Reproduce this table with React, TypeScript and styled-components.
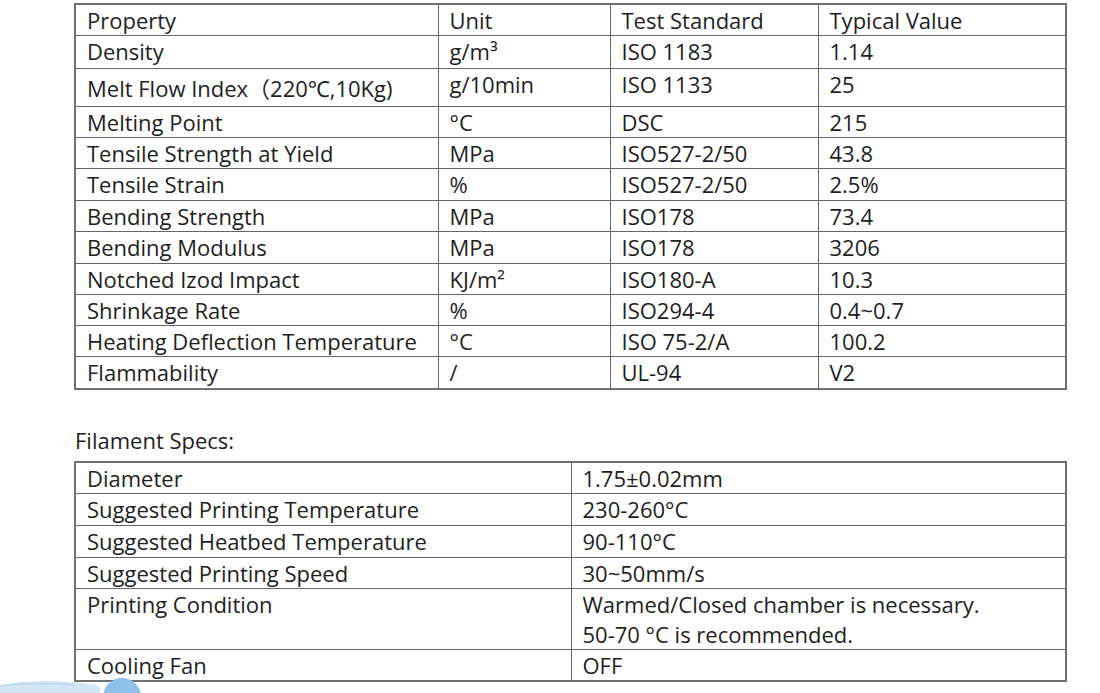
import * as React from "react";
import styled, { createGlobalStyle } from "styled-components";

interface Line {
    cells: string[];
    h: number;
}

const properties: Line[] = [
    { cells: ["Density", "g/m³", "ISO 1183", "1.14"], h: 33 },
    { cells: ["Melt Flow Index（220℃,10Kg)", "g/10min", "ISO 1133", "25"], h: 38 },
    { cells: ["Melting Point", "°C", "DSC", "215"], h: 31 },
    { cells: ["Tensile Strength at Yield", "MPa", "ISO527-2/50", "43.8"], h: 31 },
    { cells: ["Tensile Strain", "%", "ISO527-2/50", "2.5%"], h: 32 },
    { cells: ["Bending Strength", "MPa", "ISO178", "73.4"], h: 31 },
    { cells: ["Bending Modulus", "MPa", "ISO178", "3206"], h: 32 },
    { cells: ["Notched Izod Impact", "KJ/m²", "ISO180-A", "10.3"], h: 31 },
    { cells: ["Shrinkage Rate", "%", "ISO294-4", "0.4~0.7"], h: 31 },
    { cells: ["Heating Deflection Temperature", "°C", "ISO 75-2/A", "100.2"], h: 31 },
    { cells: ["Flammability", "/", "UL-94", "V2"], h: 32 },
];

const specs: Line[] = [
    { cells: ["Diameter", "1.75±0.02mm"], h: 31 },
    { cells: ["Suggested Printing Temperature", "230-260°C"], h: 32 },
    { cells: ["Suggested Heatbed Temperature", "90-110°C"], h: 32 },
    { cells: ["Suggested Printing Speed", "30~50mm/s"], h: 31 },
    { cells: ["Printing Condition", "Warmed/Closed chamber is necessary.\n50-70 °C is recommended."], h: 61 },
    { cells: ["Cooling Fan", "OFF"], h: 31 },
];

const propertyCols = [363, 172, 208, 248];
const specCols = [496, 495];

export default function App() {
    return (
        <Page>
            <GlobalStyle />
            <SpecTable>
                <colgroup>
                    {propertyCols.map((w, i) => <Col key={i} w={w} />)}
                </colgroup>
                <tbody>
                    <tr>
                        <Cell h={30}>Property</Cell>
                        <Cell h={30}>Unit</Cell>
                        <Cell h={30}>Test Standard</Cell>
                        <Cell h={30}>Typical Value</Cell>
                    </tr>
                    {properties.map((row, i) => (
                        <tr key={i}>
                            {row.cells.map((text, j) => (
                                <Cell key={j} h={row.h} shifted={i === 1 && j === 0}>
                                    {text}
                                </Cell>
                            ))}
                        </tr>
                    ))}
                </tbody>
            </SpecTable>

            <Caption>Filament Specs:</Caption>

            <SpecTable>
                <colgroup>
                    {specCols.map((w, i) => <Col key={i} w={w} />)}
                </colgroup>
                <tbody>
                    {specs.map((row, i) => (
                        <tr key={i}>
                            {row.cells.map((text, j) => (
                                <Cell key={j} h={row.h}>{text}</Cell>
                            ))}
                        </tr>
                    ))}
                </tbody>
            </SpecTable>

            <Blob width="160" height="18" viewBox="0 0 160 18">
                <path d="M0 10 C20 6 45 5 70 7 C85 8 95 9 100 12 L100 18 L0 18 Z" fill="#d3e6f6" />
                <path d="M0 11 C25 8 50 8 75 10" stroke="#b9d7f0" strokeWidth="1.5" fill="none" />
                <circle cx="122" cy="22" r="19" fill="#8ec1ea" />
            </Blob>
        </Page>
    );
}

const GlobalStyle = createGlobalStyle`
html, body {
margin: 0;
padding: 0;
background: #ffffff;
}
body {
font-family: "Open Sans", "Noto Sans", "Noto Sans CJK SC", sans-serif;
color: #1e1e1e;
}
`;

const Page = styled.div`
position: relative;
display: flex;
flex-direction: column;
align-items: flex-start;
width: 1100px;
height: 693px;
overflow: hidden;
padding: 3px 0 0 74px;
box-sizing: border-box;
`;

const SpecTable = styled.table`
width: 991px;
table-layout: fixed;
border-collapse: collapse;
border: 2px solid #707070;
font-size: 22px;
line-height: 30px;
`;

const Col = styled.col<{ w: number }>`
width: ${props => props.w}px;
`;

const Cell = styled.td<{ h: number; shifted?: boolean }>`
border: 1px solid #666666;
padding: ${props => props.shifted ? "4px" : "0"} 8px 0 11px;
height: ${props => props.h}px;
vertical-align: top;
white-space: pre-line;
box-sizing: border-box;
`;

const Caption = styled.div`
margin: 35px 0 6px 1px;
font-size: 22px;
line-height: 30px;
`;

const Blob = styled.svg`
position: absolute;
left: 0;
bottom: 0;
`;
